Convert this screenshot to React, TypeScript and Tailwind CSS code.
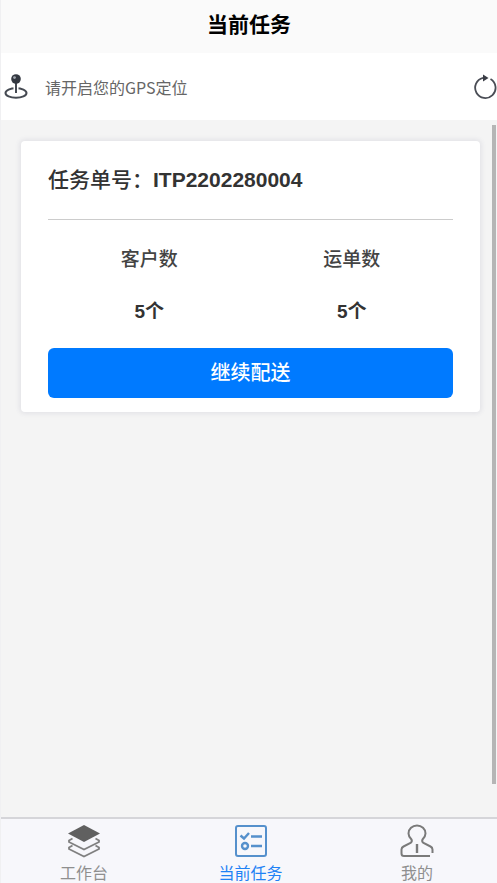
import { useState } from "react";

type TabKey = "workbench" | "current" | "mine";

const task = {
  orderNo: "ITP2202280004",
  stats: [
    { label: "客户数", value: 5 },
    { label: "运单数", value: 5 },
  ],
};

function PinIcon() {
  return (
    <svg width="24" height="26" viewBox="0 0 24 26" fill="none">
      <ellipse cx="12" cy="19" rx="10.5" ry="4.8" stroke="#454a52" strokeWidth="2" />
      <path d="M12 8v10" stroke="#fff" strokeWidth="5" />
      <path d="M12 7v12" stroke="#454a52" strokeWidth="2" />
      <circle cx="12" cy="5" r="4.8" fill="#333840" />
      <circle cx="10.5" cy="3.6" r="1.4" fill="#a3a8b0" />
    </svg>
  );
}

function RefreshIcon() {
  return (
    <svg width="24" height="26" viewBox="0 0 24 26" fill="none">
      <path d="M17.500 5A10.200 10.200 0 1 1 10 3.900" stroke="#4a4d55" strokeWidth="1.800" />
      <path d="M10 0.500l5.500 3.500-5.500 3.500z" fill="#3a3d45" />
    </svg>
  );
}

function LayersIcon() {
  return (
    <svg width="34" height="34" viewBox="0 0 34 34" fill="none">
      <path d="M17 1l16 8.500L17 18 1 9.500z" fill="#606060" />
      <path
        d="M5.500 14.500L2 16.500v1.500l15 7.500L32 18v-1.500l-3.500-2M5.500 21.500L2 23.500V25l15 7.500L32 25v-1.500l-3.500-2"
        stroke="#808080"
        strokeWidth="1.800"
      />
    </svg>
  );
}

function TaskIcon() {
  return (
    <svg width="34" height="34" viewBox="0 0 34 34" fill="none" stroke="#5590cc">
      <rect x="2" y="2" width="30" height="30" rx="2" strokeWidth="2" />
      <path d="M6.500 11.500l3.500 3 5-5.500M17 12.500h11M17 22h11" strokeWidth="2.400" />
      <circle cx="11" cy="22" r="3" strokeWidth="2.400" />
    </svg>
  );
}

function UserIcon() {
  return (
    <svg width="34" height="34" viewBox="0 0 34 34" fill="none" stroke="#7a7a7a" strokeWidth="2">
      <path d="M30 32H4q-2.500 0-2.500-2.500V25.500q0-2 2-3l7-3.500q2-1.500 1-3.500C9.500 13.500 8.500 12 8.500 9.500a8.500 8 0 0 1 17 0c0 2.500-1 4-3 6q-1 2 1 3.500l7 3.500q2 1 2 3V29" />
      <path d="M17 20v9" strokeWidth="2.400" />
    </svg>
  );
}

const tabs: { key: TabKey; label: string; icon: () => React.JSX.Element }[] = [
  { key: "workbench", label: "工作台", icon: LayersIcon },
  { key: "current", label: "当前任务", icon: TaskIcon },
  { key: "mine", label: "我的", icon: UserIcon },
];

export default function App() {
  const [activeTab, setActiveTab] = useState<TabKey>("current");

  return (
    <div className="flex min-h-screen flex-col border-l border-[#f0f0f2] bg-[#f4f4f4] font-['Liberation_Sans','Noto_Sans_CJK_SC',sans-serif]">
      <header className="flex h-[53px] items-center justify-center bg-[#fafafa] pb-1">
        <h1 className="text-[21px] leading-8 font-bold text-black">当前任务</h1>
      </header>

      <div className="flex h-[67px] items-center justify-between bg-white">
        <div className="flex items-center gap-[17px] pl-[3px]">
          <PinIcon />
          <p className="font-['Noto_Sans_CJK_SC',sans-serif] text-base text-[#666]">请开启您的GPS定位</p>
        </div>
        <button type="button" aria-label="刷新定位">
          <RefreshIcon />
        </button>
      </div>

      <main className="relative flex-1 pt-[21px] pr-[17px] pl-5">
        <section className="rounded-sm bg-white px-[27px] pb-[14px] shadow-[0_0_4px_2px_#e4e4e8]">
          <h2 className="flex h-[79px] items-center border-b border-[#ccc] text-[21px] font-medium text-[#333]">
            任务单号：<span className="font-bold">{task.orderNo}</span>
          </h2>
          <dl className="grid grid-cols-2 pt-6 text-center">
            {task.stats.map((item) => (
              <div key={item.label}>
                <dt className="text-[19px] leading-8 font-medium text-[#444]">{item.label}</dt>
                <dd className="pt-5 text-[19px] leading-8 font-bold text-[#333]">{item.value}个</dd>
              </div>
            ))}
          </dl>
          <button
            type="button"
            className="mt-5 h-[50px] w-full rounded-md bg-[#007aff] text-xl font-medium text-white"
          >
            继续配送
          </button>
        </section>

        {/* scroll indicator */}
        <div className="absolute top-[5px] right-[1px] bottom-[33px] w-1 bg-[#b5b5b5]" />
      </main>

      <nav className="flex h-[66px] justify-between border-t-2 border-[#d5d5d9] bg-[#f7f7fb] pr-8 pl-[35px]">
        {tabs.map(({ key, label, icon: Icon }) => (
          <button
            key={key}
            type="button"
            onClick={() => setActiveTab(key)}
            className={`flex w-24 flex-col items-center pt-[5px] font-['Noto_Sans_CJK_SC',sans-serif] text-base ${
              activeTab === key ? "text-[#1f82f5]" : "text-[#8f8f8f]"
            }`}
          >
            <Icon />
            <span className="pt-1 leading-5">{label}</span>
          </button>
        ))}
      </nav>
    </div>
  );
}
